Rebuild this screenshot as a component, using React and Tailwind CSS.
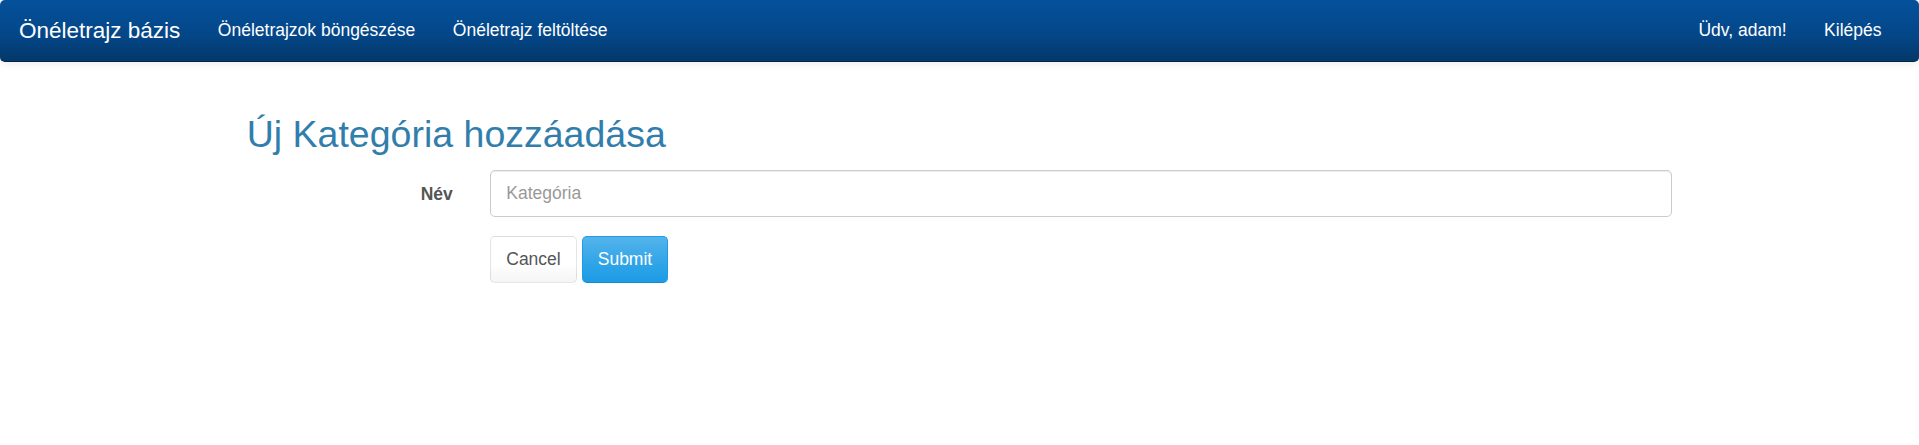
export default function App() {
  return (
    <div className="min-h-[445px] bg-white font-['Liberation_Sans',Arial,sans-serif] text-[17.5px] text-[#555]">
      <nav className="flex h-[62px] items-center rounded-[5px] border-b border-[#022241] bg-[linear-gradient(#04519b,#044687_60%,#033769)] text-white shadow-[0_1px_10px_rgba(0,0,0,0.1)]">
        <a className="pl-[19px] pr-[18.75px] text-[22.5px] leading-[25px] text-white">Önéletrajz bázis</a>
        <a className="px-[18.75px] text-[17.5px] leading-[25px] text-white">Önéletrajzok böngészése</a>
        <a className="px-[18.75px] text-[17.5px] leading-[25px] text-white">Önéletrajz feltöltése</a>
        <div className="ml-auto flex pr-[18.75px]">
          <a className="px-[18.75px] text-[17.5px] leading-[25px] text-white">Üdv, adam!</a>
          <a className="px-[18.75px] text-[17.5px] leading-[25px] text-white">Kilépés</a>
        </div>
      </nav>
      <div className="mx-auto w-[1463px] pt-[27px]">
        <h2 className="mt-[25px] mb-[15px] px-[18.75px] text-[37.5px] leading-[1.1] font-normal text-[#317eac]">
          Új Kategória hozzáadása
        </h2>
        <form className="flex flex-col gap-[18.75px]">
          <div className="flex items-center">
            <label className="w-[243.5px] shrink-0 pr-[18.75px] text-right font-bold text-[#555]">Név</label>
            <div className="flex-1 px-[18.75px]">
              <input
                type="text"
                placeholder="Kategória"
                className="h-[47px] w-full rounded-[5px] border border-[#ccc] px-[15px] text-[17.5px] text-[#555] shadow-[inset_0_1px_1px_rgba(0,0,0,0.075)] outline-none placeholder:text-[#999]"
              />
            </div>
          </div>
          <div className="flex">
            <div className="w-[243.5px] shrink-0" />
            <div className="flex flex-1 gap-[5px] px-[18.75px]">
              <button
                type="button"
                className="h-[47px] rounded-[5px] border border-[rgba(0,0,0,0.1)] bg-[linear-gradient(#ffffff,#ffffff_60%,#f5f5f5)] px-[15px] text-[17.5px] text-[#555]"
              >
                Cancel
              </button>
              <button
                type="button"
                className="h-[47px] rounded-[5px] border border-[#1d9ce5] border-b-[#178acc] bg-[linear-gradient(#54b4eb,#2fa4e7_60%,#1d9ce5)] px-[15px] text-[17.5px] text-white"
              >
                Submit
              </button>
            </div>
          </div>
        </form>
      </div>
    </div>
  );
}
